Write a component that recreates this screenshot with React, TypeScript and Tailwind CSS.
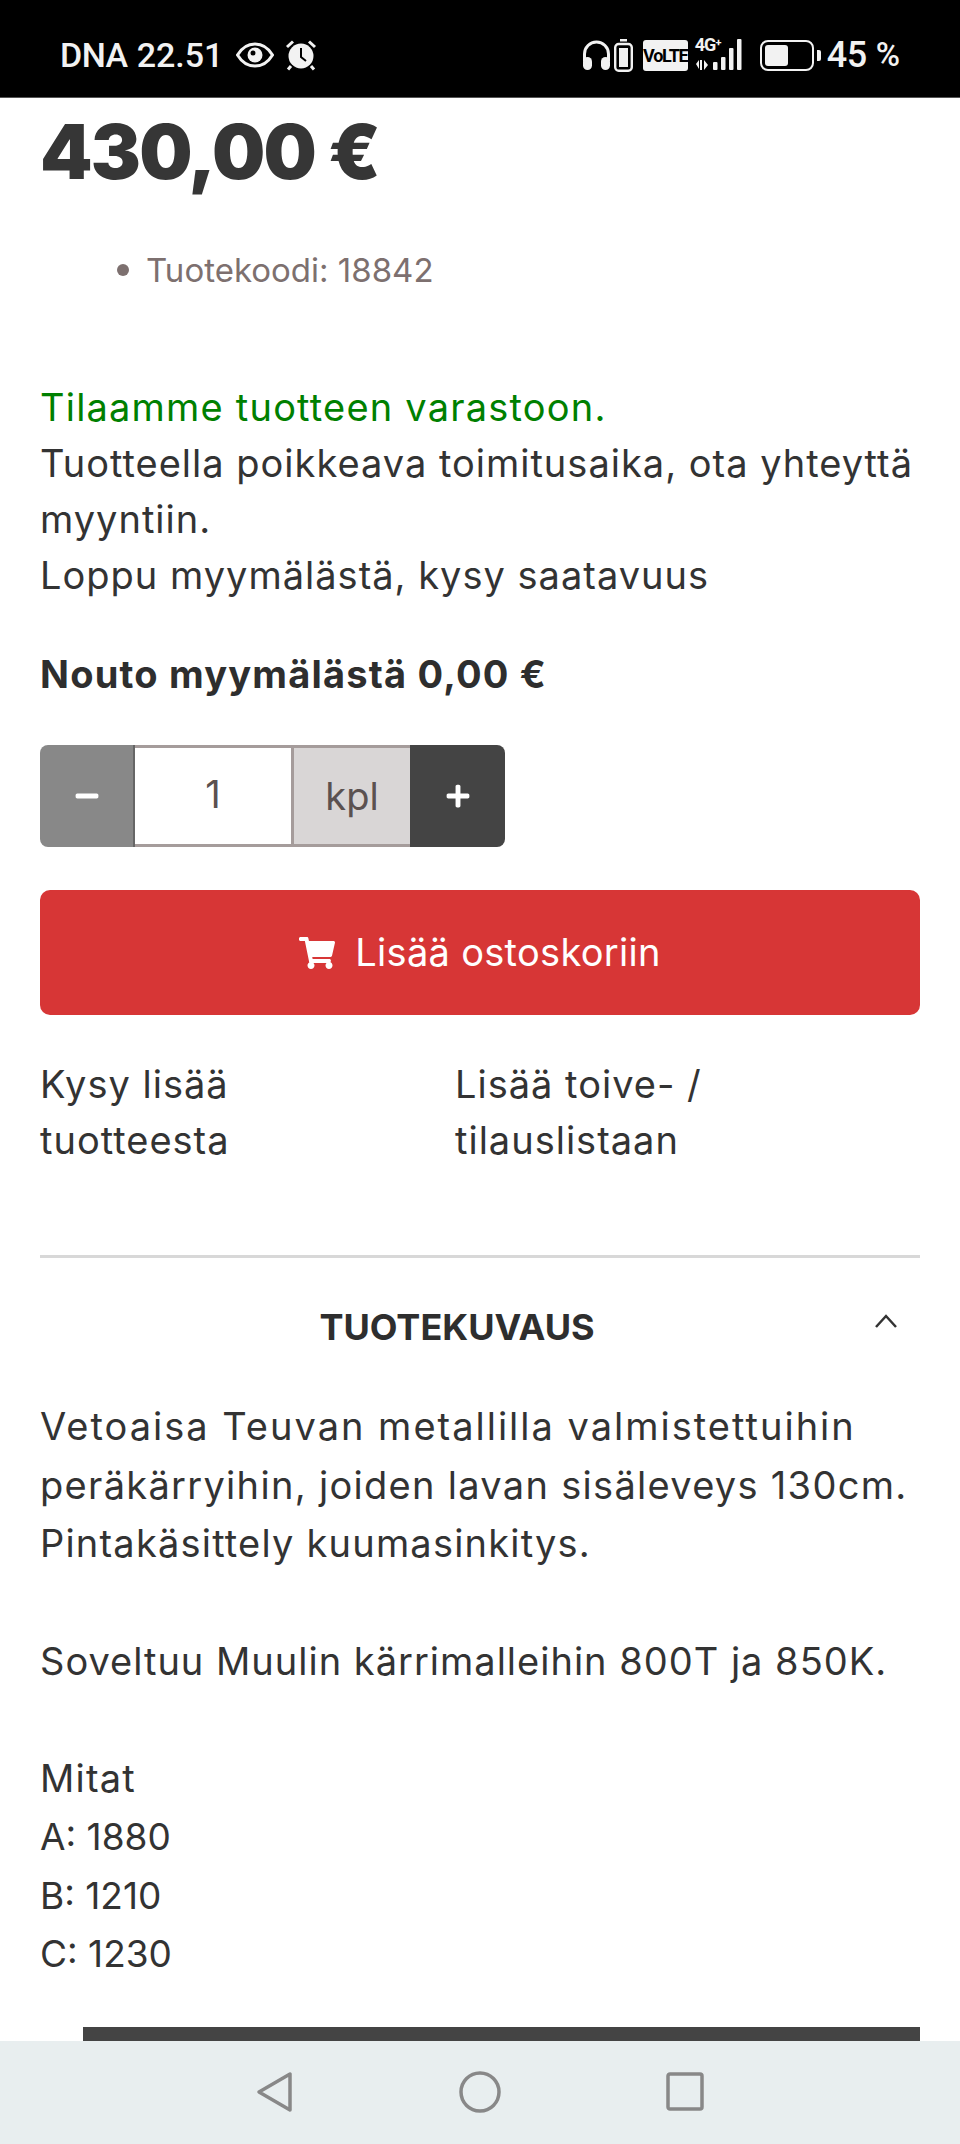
import React from 'react';
import { FaMinus, FaPlus, FaShoppingCart } from 'react-icons/fa';

const font = 'font-["Inter","Liberation_Sans",sans-serif]';

const StatusBar = () => (
  <div className='flex h-[98px] shrink-0 items-center justify-between border-b border-[#555] bg-black pl-[60px] pr-[60px] pt-[13px] font-["Roboto",sans-serif] text-[#f2f2f2]'>
    <div className="flex items-center">
      <span className="text-[34px] font-medium tracking-[-0.5px]">DNA</span>
      <span className="ml-[9px] text-[34px] font-medium">22.51</span>
      <svg className="ml-[13px]" width="38" height="26" viewBox="0 0 38 26" fill="none">
        <path d="M1.500 13C6 5.500 12 2 19 2s13 3.500 17.500 11C32 20.500 26 24 19 24S6 20.500 1.500 13Z" stroke="#f2f2f2" strokeWidth="3" />
        <circle cx="19" cy="13" r="7.500" fill="#f2f2f2" />
        <circle cx="17" cy="11" r="2.500" fill="#000" />
      </svg>
      <svg className="ml-[11px]" width="32" height="32" viewBox="0 0 32 32" fill="none">
        <circle cx="16" cy="17" r="12.500" fill="#f2f2f2" />
        <path d="M16 9v9l5 4" stroke="#000" strokeWidth="2" />
        <path d="M2 8 8 2.500M30 8l-6-5.500M6 27l-3 3.500M26 27l3 3.500" stroke="#f2f2f2" strokeWidth="3" />
      </svg>
    </div>
    <div className="flex items-center">
      <svg width="29" height="30" viewBox="0 0 29 30" fill="none">
        <path d="M2.500 21v-7a12 12 0 0 1 24 0v7" stroke="#f2f2f2" strokeWidth="3" />
        <rect x="1" y="17" width="9" height="13" rx="4.500" fill="#f2f2f2" />
        <rect x="19" y="17" width="9" height="13" rx="4.500" fill="#f2f2f2" />
      </svg>
      <svg className="ml-[3px]" width="19" height="33" viewBox="0 0 19 33" fill="none">
        <rect x="6" y="0" width="7" height="2.500" fill="#f2f2f2" />
        <rect x="1.200" y="5" width="16.600" height="26.800" rx="3.500" stroke="#f2f2f2" strokeWidth="2.400" />
        <rect x="5" y="9" width="9" height="19" fill="#f2f2f2" />
      </svg>
      <span className="ml-[10px] flex h-[31px] w-[45px] items-center justify-center rounded-[3px] bg-[#f2f2f2] text-[18px] font-bold tracking-[-1.2px] text-black">
        VoLTE
      </span>
      <div className="relative ml-[7px] h-[32px] w-[53px]">
        <span className="absolute left-0 top-[-3px] text-[18px] leading-[18px] font-bold tracking-[-1px]">4G<sup className="text-[11px]">+</sup></span>
        <svg className="absolute left-0 top-0" width="53" height="32" viewBox="0 0 53 32" fill="#f2f2f2">
          <path d="M5 21h2v10H5zM1 25l3-4v9zM9 21l4 5-4 5z" />
          <rect x="18" y="23" width="4.500" height="8" rx="1" />
          <rect x="26" y="18" width="4.500" height="13" rx="1" />
          <rect x="34" y="9" width="4.500" height="22" rx="1" />
          <rect x="42" y="0" width="4.500" height="31" rx="1" />
        </svg>
      </div>
      <div className="ml-[12px] flex h-[31px] w-[54px] items-center rounded-[8px] border-[2.500px] border-[#f2f2f2] p-[3px]">
        <div className="h-full w-[23px] rounded-[3px] bg-[#f2f2f2]" />
      </div>
      <div className="ml-[3px] h-[11px] w-[4px] rounded-r-[2px] bg-[#f2f2f2]" />
      <span className="ml-[6px] text-[36px] font-medium tracking-[-0.5px]">45</span>
      <span className="ml-[9px] text-[33px] font-medium">%</span>
    </div>
  </div>
);

const NavBar = () => (
  <div className="z-10 flex h-[103px] shrink-0 items-start bg-[#e8eeef] pt-[30px]">
    <svg className="ml-[256px]" width="37" height="42" viewBox="0 0 37 42" fill="none">
      <path d="M34 3v36L3 21Z" stroke="#888" strokeWidth="3.500" strokeLinejoin="round" />
    </svg>
    <svg className="ml-[166px]" width="42" height="42" viewBox="0 0 42 42" fill="none">
      <circle cx="21" cy="21" r="19" stroke="#888" strokeWidth="3.500" />
    </svg>
    <svg className="ml-[165px] mt-[1px]" width="38" height="39" viewBox="0 0 38 39" fill="none">
      <rect x="2" y="2" width="34" height="35" rx="2" stroke="#888" strokeWidth="3.500" />
    </svg>
  </div>
);

export default function App() {
  return (
    <div className={`${font} flex h-[2144px] w-[960px] flex-col overflow-hidden bg-white text-[#333]`}>
      <StatusBar />
      <main className="min-h-0 flex-1 overflow-hidden px-[40px]">
        <div className="mt-[2px] h-[104px] text-[75px] leading-[104px] font-black tracking-[-1.800px] text-[#363636]">430,00 €</div>
        <ul className="mt-[46px] flex items-center pl-[77px] text-[#7d706f]">
          <li className="flex items-center text-[33px] leading-[40px]">
            <span className="mr-[17px] h-[12px] w-[12px] rounded-full bg-[#7d706f]" />
            Tuotekoodi: 18842
          </li>
        </ul>
        <div className="mt-[89px] text-[38px] leading-[56px] tracking-[1px]">
          <div className="tracking-[1.200px] text-[#008000]">Tilaamme tuotteen varastoon.</div>
          <div>Tuotteella poikkeava toimitusaika, ota yhteyttä myyntiin.</div>
          <div>Loppu myymälästä, kysy saatavuus</div>
        </div>
        <div className="mt-[43px] text-[38px] leading-[56px] font-bold tracking-[1.200px] text-[#2e2e2e]">Nouto myymälästä 0,00 €</div>
        <div className="mt-[43px] flex h-[102px] w-[465px]">
          <button className="flex w-[95px] items-center justify-center rounded-l-[8px] border-r-[2px] border-[#666] bg-[#888] text-white">
            <FaMinus size={26} />
          </button>
          <div className="flex w-[156px] items-center justify-center border-y-[3px] border-[#a59c9b] pb-[3px] text-[38px] text-[#5b5150]">1</div>
          <div className="flex w-[119px] items-center justify-center border-x-[3px] border-y-[3px] border-[#a59c9b] border-r-0 bg-[#d9d6d6] text-[38px] text-[#5b5150]">kpl</div>
          <button className="flex w-[95px] items-center justify-center rounded-r-[8px] bg-[#444] text-white">
            <FaPlus size={26} />
          </button>
        </div>
        <button className="mt-[43px] flex h-[125px] w-full items-center justify-center rounded-[10px] bg-[#d73636] text-[38px] tracking-[0.3px] text-white">
          <FaShoppingCart size={36} className="mr-[20px]" />
          Lisää ostoskoriin
        </button>
        <div className="mt-[41px] grid grid-cols-[415px_1fr] text-[38px] leading-[56px] tracking-[1px]">
          <div className="w-[260px]">Kysy lisää tuotteesta</div>
          <div className="w-[300px]">Lisää toive- / tilauslistaan</div>
        </div>
        <div className="mt-[87px] h-[3px] bg-[#d8d8d8]" />
        <div className="relative mt-[41px] pr-[46px] text-center text-[36px] leading-[56px] font-bold text-[#2e2e2e]">
          TUOTEKUVAUS
          <svg className="absolute right-[22px] top-[15px]" width="24" height="14" viewBox="0 0 24 14" fill="none">
            <path d="M2 13 12 2l10 11" stroke="#333" strokeWidth="2.500" />
          </svg>
        </div>
        <div className="mt-[42px] text-[38px] leading-[58.700px] tracking-[1.200px]">
          <div className="tracking-[2px]">Vetoaisa Teuvan metallilla valmistettuihin</div>
          <div className="tracking-[1.300px]">peräkärryihin, joiden lavan sisäleveys 130cm.</div>
          <div>Pintakäsittely kuumasinkitys.</div>
          <div className="h-[58.700px]" />
          <div className="tracking-[1px]">Soveltuu Muulin kärrimalleihin 800T ja 850K.</div>
          <div className="h-[58.700px]" />
          <div>Mitat</div>
          <div className="text-[37px] tracking-normal">A: 1880</div>
          <div className="text-[37px] tracking-normal">B: 1210</div>
          <div className="text-[37px] tracking-normal">C: 1230</div>
        </div>
        <div className="ml-[43px] mt-[43px] h-[60px] bg-[#444]" />
      </main>
      <NavBar />
    </div>
  );
}
